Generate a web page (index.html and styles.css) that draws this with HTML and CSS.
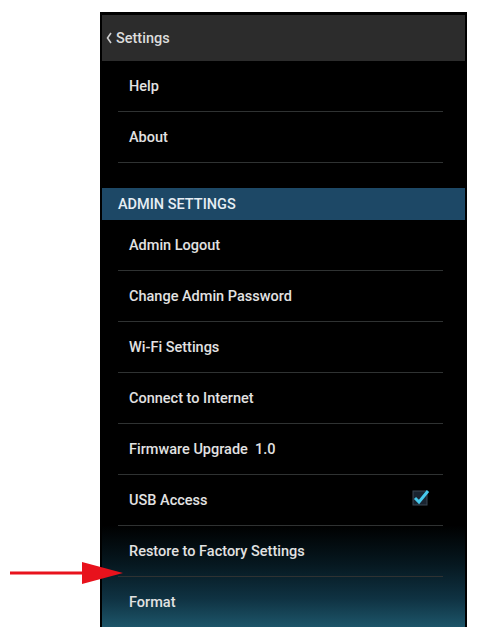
FILE: index.html
```html
<!DOCTYPE html>
<html>
<head>
<meta charset="utf-8">
<link rel="stylesheet" href="styles.css">
</head>
<body>
<div class="page">
  <div class="phone">
    <div class="header">
      <svg class="back" width="6" height="12" viewBox="0 0 6 12"><path d="M5 1 L1.5 6 L5 11" fill="none" stroke="#cfcfcf" stroke-width="1.6"/></svg>
      <span class="title">Settings</span>
    </div>
    <div class="list">
      <div class="row"><span>Help</span></div>
      <div class="row"><span>About</span></div>
      <div class="spacer"></div>
      <div class="section">ADMIN SETTINGS</div>
      <div class="row"><span>Admin Logout</span></div>
      <div class="row"><span>Change Admin Password</span></div>
      <div class="row"><span>Wi-Fi Settings</span></div>
      <div class="row"><span>Connect to Internet</span></div>
      <div class="row"><span>Firmware Upgrade&nbsp;&nbsp;1.0</span></div>
      <div class="row"><span>USB Access</span>
        <svg class="check" width="20" height="20" viewBox="0 0 20 20">
          <rect x="2" y="4" width="14" height="14" fill="#1a2430" stroke="#3a4652" stroke-width="1"/>
          <path d="M4 11 L8 15 L17 4" fill="none" stroke="#47c9ec" stroke-width="3"/>
        </svg>
      </div>
      <div class="row"><span>Restore to Factory Settings</span></div>
      <div class="row last"><span>Format</span></div>
    </div>
  </div>
  <svg class="arrow" width="125" height="30" viewBox="0 0 125 30">
    <line x1="10" y1="15" x2="86" y2="15" stroke="#e8121c" stroke-width="3"/>
    <polygon points="82,4 123,15 82,26" fill="#e8121c"/>
  </svg>
</div>
</body>
</html>
```
FILE: styles.css
```css
html, body {
  margin: 0;
  padding: 0;
  background: #ffffff;
}
.page {
  position: relative;
  width: 479px;
  height: 634px;
}
.phone {
  position: absolute;
  left: 100px;
  top: 12px;
  width: 367px;
  height: 615px;
  box-sizing: border-box;
  background: #000;
  padding: 3px 2px 3px 2px;
  display: flex;
  flex-direction: column;
  font-family: Roboto, "Liberation Sans", sans-serif;
}
.header {
  height: 46px;
  flex: none;
  background: #2c2c2c;
  display: flex;
  align-items: center;
  padding-left: 4px;
  gap: 4px;
  color: #dcdcdc;
  font-size: 14.5px;
  font-weight: 500;
}
.list {
  flex: 1;
  background: linear-gradient(to bottom, #000 0%, #000 82%, #061820 89%, #0f3242 95%, #1d5569 100%);
  display: flex;
  flex-direction: column;
}
.row {
  height: 50px;
  flex: none;
  display: flex;
  align-items: center;
  justify-content: space-between;
  margin: 0 22px 0 16px;
  padding-left: 11px;
  border-bottom: 1px solid #2f3232;
  color: #e2e2e2;
  font-size: 14.5px;
  font-weight: 500;
}
.row.last {
  border-bottom: none;
}
.check {
  margin-right: 12px;
  margin-top: -6px;
}
.spacer {
  height: 25px;
  flex: none;
}
.section {
  height: 32px;
  flex: none;
  background: #1d4866;
  color: #e6eef4;
  font-size: 14.5px;
  font-weight: 500;
  display: flex;
  align-items: center;
  padding-left: 16px;
}
.arrow {
  position: absolute;
  left: 0;
  top: 558px;
}
```
